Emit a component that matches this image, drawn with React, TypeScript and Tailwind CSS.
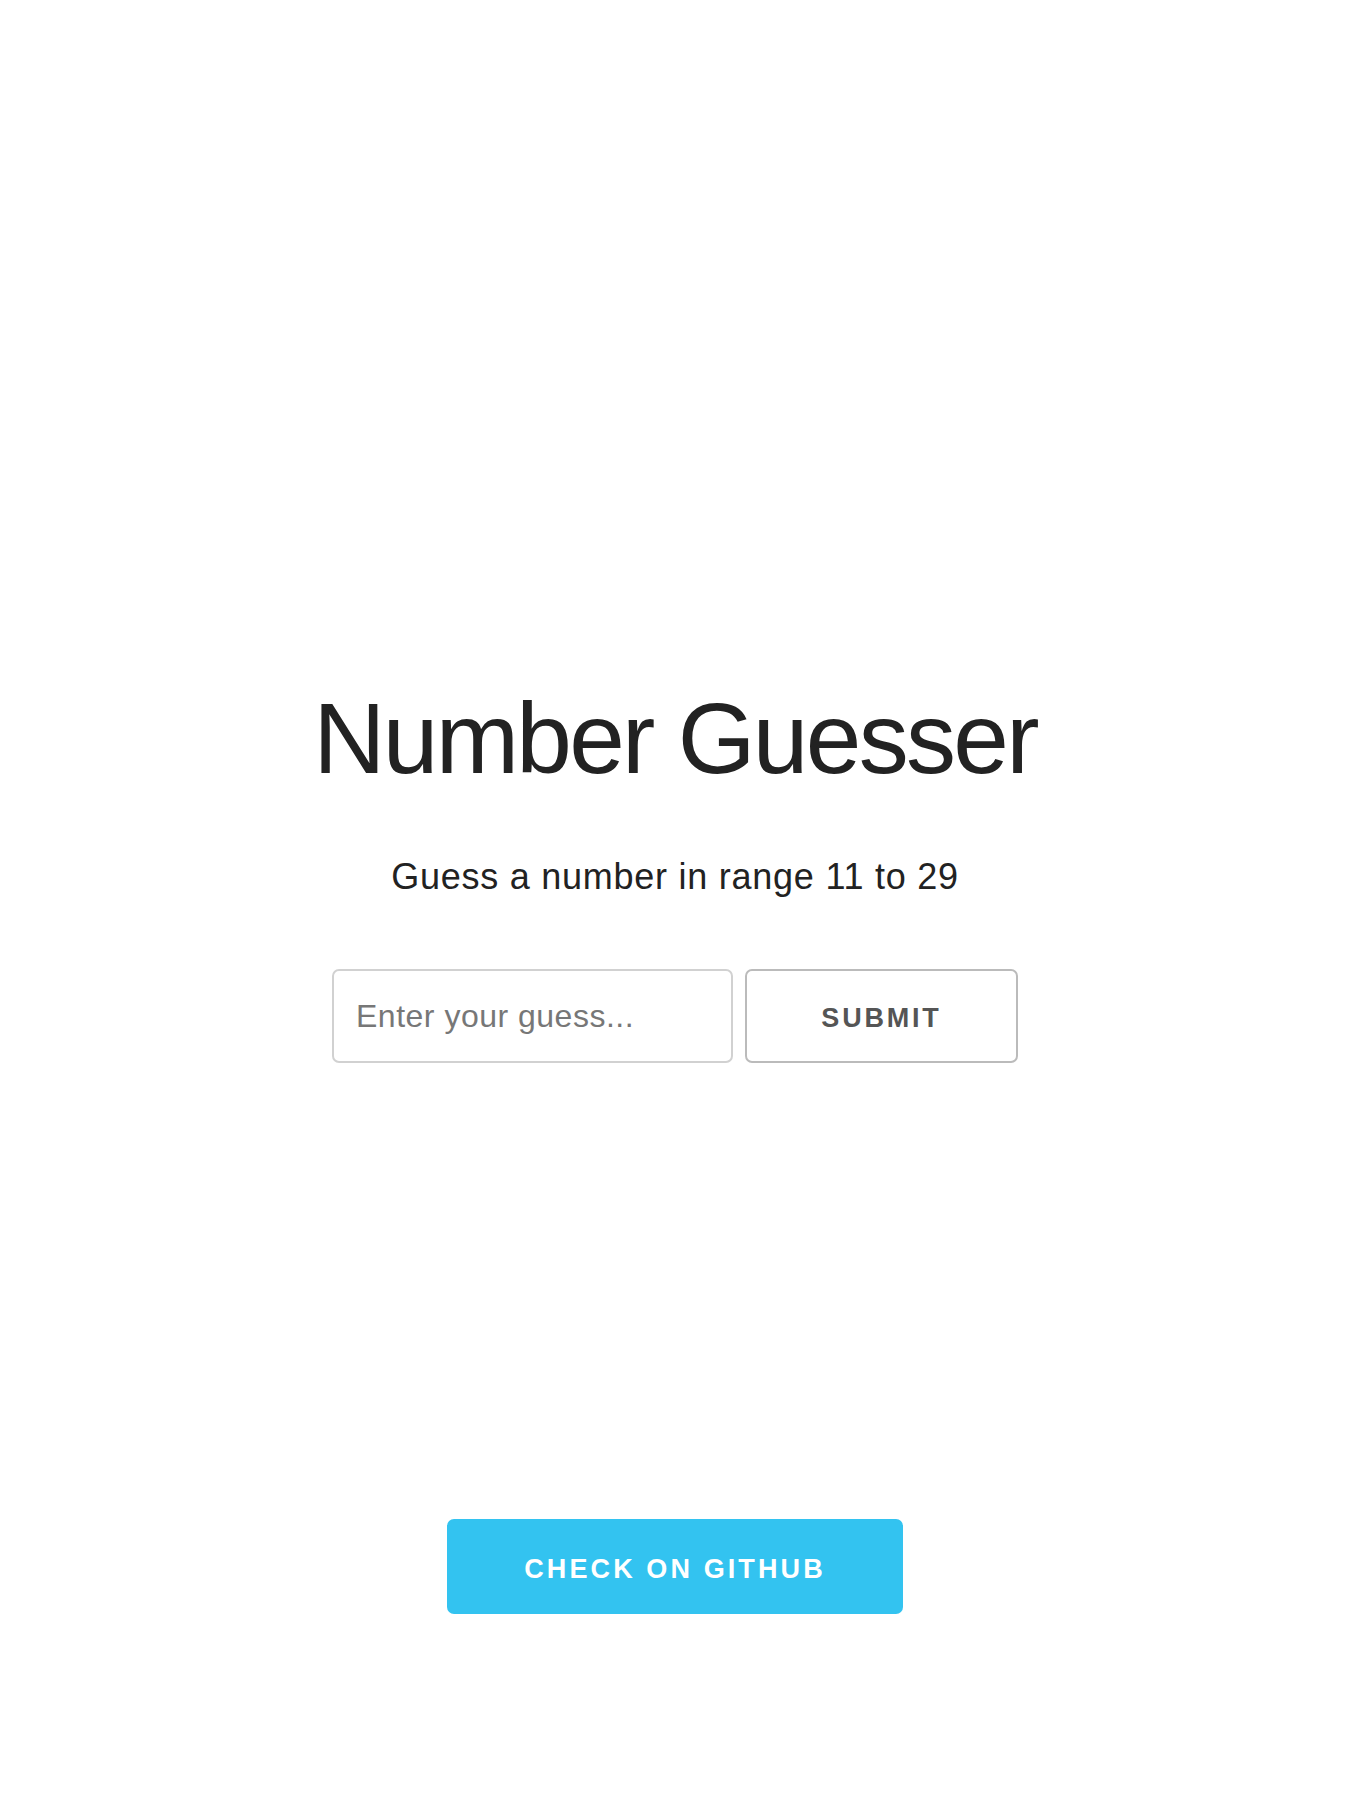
import { useState } from "react";

const App: React.FC = () => {
  const [guess, setGuess] = useState("");

  return (
    <div className="min-h-[1800px] bg-white flex flex-col items-center pt-[688px] font-['Liberation_Sans',Arial,sans-serif]">
      {/* TITLE */}
      <h1 className="text-[100px] leading-[100px] tracking-[-2.7px] text-[#222] font-normal">
        Number Guesser
      </h1>

      {/* RANGE HINT */}
      <p className="mt-[71px] text-[36px] leading-[36px] tracking-[0.75px] text-[#222]">
        Guess a number in range 11 to 29
      </p>

      {/* GUESS FORM */}
      <form
        className="mt-[74px] flex gap-[12px]"
        onSubmit={(e) => e.preventDefault()}
      >
        <input
          type="number"
          value={guess}
          onChange={(e) => setGuess(e.target.value)}
          placeholder="Enter your guess..."
          className="w-[401px] h-[94px] px-[22px] border-2 border-[#d1d1d1] rounded-[7px] text-[32px] tracking-[0.5px] text-[#222] placeholder:text-[#777] outline-none [appearance:textfield]"
        />
        <button
          type="submit"
          className="w-[273px] h-[94px] pt-[4px] border-2 border-[#bbb] rounded-[7px] bg-transparent text-[27px] font-bold tracking-[2.8px] text-[#555] uppercase"
        >
          Submit
        </button>
      </form>

      {/* REPO LINK */}
      <a
        href="#"
        className="mt-[456px] w-[456px] h-[95px] flex items-center justify-center pt-[5px] rounded-[7px] bg-[#33c3f0] text-white text-[27px] font-bold tracking-[3.1px] uppercase"
      >
        Check on GitHub
      </a>
    </div>
  );
};

export default App;
